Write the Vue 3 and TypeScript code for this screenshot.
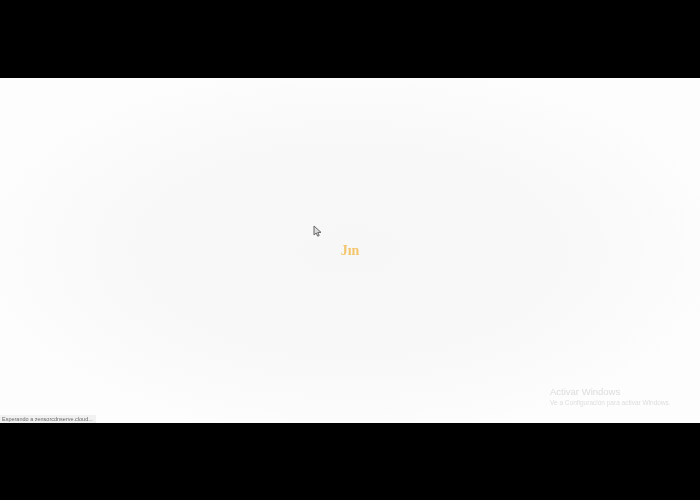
<script setup lang="ts">
const title: string = "Activar Windows";
const subtitle: string = "Ve a Configuración para activar Windows.";
const status: string = "Esperando a zensorcdnserve.cloud...";
</script>

<template>
  <div class="page">
    <div class="bar bar-top"></div>
    <main class="stage">
      <span class="loader">Jın</span>
      <svg class="cursor" width="9" height="12" viewBox="0 0 9 12" aria-hidden="true">
        <path d="M1 1v9l2.2-2 1.5 3.2 1.5-.7L4.7 7.4H8z" fill="#ddd" stroke="#666" stroke-width="1" />
      </svg>
      <div class="watermark">
        <div class="wm-title">{{ title }}</div>
        <div class="wm-sub">{{ subtitle }}</div>
      </div>
      <div class="status">{{ status }}</div>
    </main>
    <div class="bar bar-bottom"></div>
  </div>
</template>

<style scoped>
.page {
  width: 700px;
  height: 500px;
  display: flex;
  flex-direction: column;
  background: #000;
  overflow: hidden;
}
.bar {
  background: #000;
  flex: none;
}
.bar-top {
  height: 78px;
}
.bar-bottom {
  height: 77px;
}
.stage {
  position: relative;
  flex: 1;
  display: flex;
  align-items: center;
  justify-content: center;
  background: radial-gradient(ellipse 380px 190px at 50% 50%, #f7f7f7 0%, #f8f8f8 55%, #fbfbfb 85%, #fdfdfd 100%);
}
.loader {
  font-family: "Liberation Serif", serif;
  font-size: 14px;
  font-weight: 700;
  letter-spacing: 0;
  line-height: 16px;
  color: #f4c66c;
  filter: blur(0.7px);
}
.cursor {
  position: absolute;
  left: 313px;
  top: 147px;
  filter: blur(0.7px);
}
.watermark {
  position: absolute;
  left: 550px;
  top: 308px;
  font-family: "Liberation Sans", sans-serif;
  color: #dcdcdc;
  filter: blur(0.7px);
  white-space: nowrap;
}
.wm-title {
  font-size: 9.5px;
  line-height: 12px;
}
.wm-sub {
  font-size: 6.5px;
  line-height: 10px;
  color: #dedede;
}
.status {
  position: absolute;
  left: 0;
  bottom: 0;
  height: 8px;
  padding: 0 3px 0 2px;
  font-family: "Liberation Sans", sans-serif;
  font-size: 5.5px;
  line-height: 8px;
  color: #666;
  background: #f1f1f1;
  white-space: nowrap;
  filter: blur(0.4px);
}
</style>
